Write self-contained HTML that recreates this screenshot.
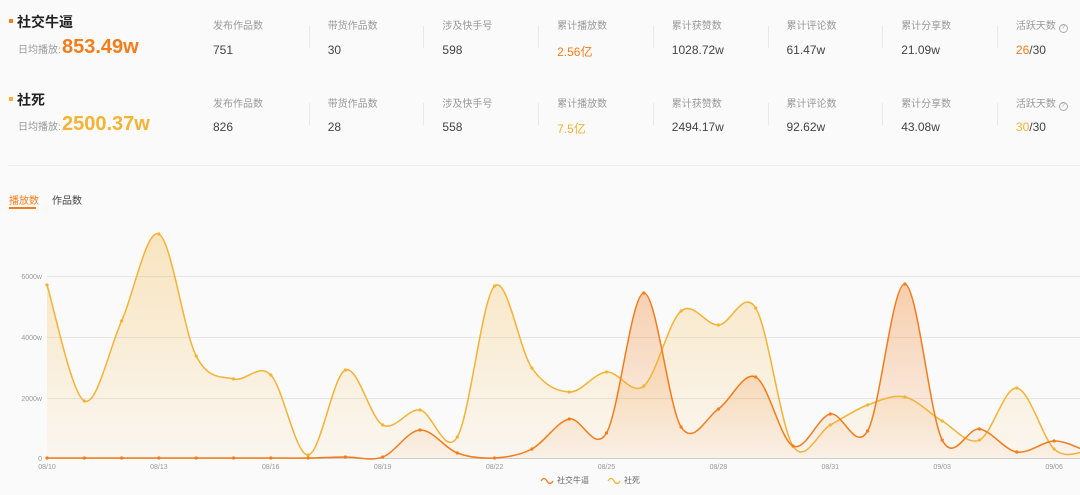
<!DOCTYPE html>
<html><head><meta charset="utf-8"><style>
body{margin:0;width:1080px;height:495px;background:#fafafa;font-family:"Liberation Sans","Noto Sans CJK SC",sans-serif;position:relative;overflow:hidden;color:#333}
.a{position:absolute;white-space:nowrap}
.t{font-size:14px;font-weight:bold;color:#222}
.dot{width:4px;height:4px;}
.lb{font-size:10px;color:#999}
.v{font-size:12px;color:#444}
.big{font-size:20px;font-weight:bold}
.div{position:absolute;width:1px;height:22px;background:#e8e8e8}
</style></head><body>
<div class="a dot" style="left:9px;top:19px;background:#f37c1c"></div>
<div class="a t" style="left:17px;top:12px">社交牛逼</div>
<div class="a lb" style="left:18px;top:41px">日均播放:</div>
<div class="a big" style="left:62px;top:36px;color:#f37c1c">853.49w</div>
<div class="a dot" style="left:9px;top:97px;background:#f5b235"></div>
<div class="a t" style="left:17px;top:90px">社死</div>
<div class="a lb" style="left:18px;top:118px">日均播放:</div>
<div class="a big" style="left:62px;top:113px;color:#f5b235">2500.37w</div>
<div id="cols"></div>
<div class="a" style="left:8px;top:165px;width:1072px;height:1px;background:#eee"></div>
<div class="a" style="left:9px;top:192px;font-size:10px;color:#f37c1c">播放数</div>
<div class="a" style="left:9px;top:207px;width:27px;height:2px;background:#f37c1c"></div>
<div class="a" style="left:52px;top:192px;font-size:10px;color:#444">作品数</div>
<svg class="a" style="left:0;top:0" width="1080" height="495">
<defs>
<linearGradient id="g1" x1="0" y1="0" x2="0" y2="1"><stop offset="0" stop-color="#f5b235" stop-opacity=".3"/><stop offset="1" stop-color="#f5b235" stop-opacity=".05"/></linearGradient>
<linearGradient id="g2" x1="0" y1="0" x2="0" y2="1"><stop offset="0" stop-color="#f37c1c" stop-opacity=".35"/><stop offset="1" stop-color="#f37c1c" stop-opacity=".05"/></linearGradient>
</defs>
<g stroke="#e6e6e6" stroke-width="1">
<line x1="47" x2="1080" y1="276.5" y2="276.5"/><line x1="47" x2="1080" y1="337.5" y2="337.5"/><line x1="47" x2="1080" y1="398.5" y2="398.5"/>
</g>
<line x1="47" x2="1080" y1="458.5" y2="458.5" stroke="#ccc"/>
<g font-size="7" fill="#999" text-anchor="end">
<text x="42" y="279">6000w</text><text x="42" y="340">4000w</text><text x="42" y="401">2000w</text><text x="42" y="461">0</text>
</g>
<g id="xl" font-size="7" fill="#999" text-anchor="middle"></g>
<path id="f1" fill="url(#g1)"/><path id="f2" fill="url(#g2)"/>
<path id="l1" fill="none" stroke="#f5b235" stroke-width="1.5"/>
<path id="l2" fill="none" stroke="#f37c1c" stroke-width="1.5"/>
<g id="pts"></g>
<path d="M541 481q3-5 6 0t6 0" fill="none" stroke="#f37c1c" stroke-width="1.3"/>
<text x="557" y="483" font-size="8" fill="#666">社交牛逼</text>
<path d="M608 481q3-5 6 0t6 0" fill="none" stroke="#f5b235" stroke-width="1.3"/>
<text x="624" y="483" font-size="8" fill="#666">社死</text>
</svg>
<script>
var L=["发布作品数","带货作品数","涉及快手号","累计播放数","累计获赞数","累计评论数","累计分享数","活跃天数"];
var A=["751","30","598","<span style='color:#f37c1c'>2.56亿</span>","1028.72w","61.47w","21.09w","<span style='color:#f37c1c'>26</span>/30"];
var B=["826","28","558","<span style='color:#f5b235'>7.5亿</span>","2494.17w","92.62w","43.08w","<span style='color:#f5b235'>30</span>/30"];
var h="";
for(var i=0;i<8;i++){var x=213+i*114.7;
var q=i==7?" <span style='display:inline-block;width:7px;height:7px;border:1px solid #aaa;border-radius:50%;font-size:6px;line-height:7px;text-align:center'>?</span>":"";
h+="<div class='a lb' style='left:"+x+"px;top:17px'>"+L[i]+q+"</div><div class='a v' style='left:"+x+"px;top:43px'>"+A[i]+"</div>";
h+="<div class='a lb' style='left:"+x+"px;top:95px'>"+L[i]+q+"</div><div class='a v' style='left:"+x+"px;top:120px'>"+B[i]+"</div>";
if(i>0){h+="<div class='div' style='left:"+(x-19)+"px;top:26px'></div><div class='div' style='left:"+(x-19)+"px;top:103px'></div>";}}
document.getElementById("cols").innerHTML=h;
var Y1=[285,401,321,234,356,379,375,455,370,425,410,437,286,368,392,372,386,311,325,308,446,425,405,397,421,440,388,449];
var Y2=[458,458,458,458,458,458,458,458,457,457,430,453,458,449,419,433,293,427,409,377,446,414,431,284,440,429,452,441];
function P(Y,last){var p=[];for(var i=0;i<Y.length;i++)p.push([47+i*37.3,Y[i]]);p.push([1084,last]);return p;}
function path(p){var d="M"+p[0][0]+" "+p[0][1];for(var i=0;i<p.length-1;i++){var p0=p[i-1]||p[i],p1=p[i],p2=p[i+1],p3=p[i+2]||p2;
d+="C"+(p1[0]+(p2[0]-p0[0])/6)+" "+(p1[1]+(p2[1]-p0[1])/6)+" "+(p2[0]-(p3[0]-p1[0])/6)+" "+(p2[1]-(p3[1]-p1[1])/6)+" "+p2[0]+" "+p2[1];}return d;}
var p1=P(Y1,452),p2=P(Y2,450);
var d1=path(p1),d2=path(p2);
l1.setAttribute("d",d1);l2.setAttribute("d",d2);
f1.setAttribute("d",d1+"L1084 458L47 458Z");f2.setAttribute("d",d2+"L1084 458L47 458Z");
var s="";for(var i=0;i<28;i++){s+="<circle cx='"+p1[i][0]+"' cy='"+p1[i][1]+"' r='1.6' fill='#f5b235'/><circle cx='"+p2[i][0]+"' cy='"+p2[i][1]+"' r='1.6' fill='#f37c1c'/>";}
pts.innerHTML=s;
var lab=["08/10","08/13","08/16","08/19","08/22","08/25","08/28","08/31","09/03","09/06"],t="";
for(var i=0;i<10;i++)t+="<text x='"+(47+i*3*37.3)+"' y='469'>"+lab[i]+"</text>";
xl.innerHTML=t;
</script>
</body></html>
